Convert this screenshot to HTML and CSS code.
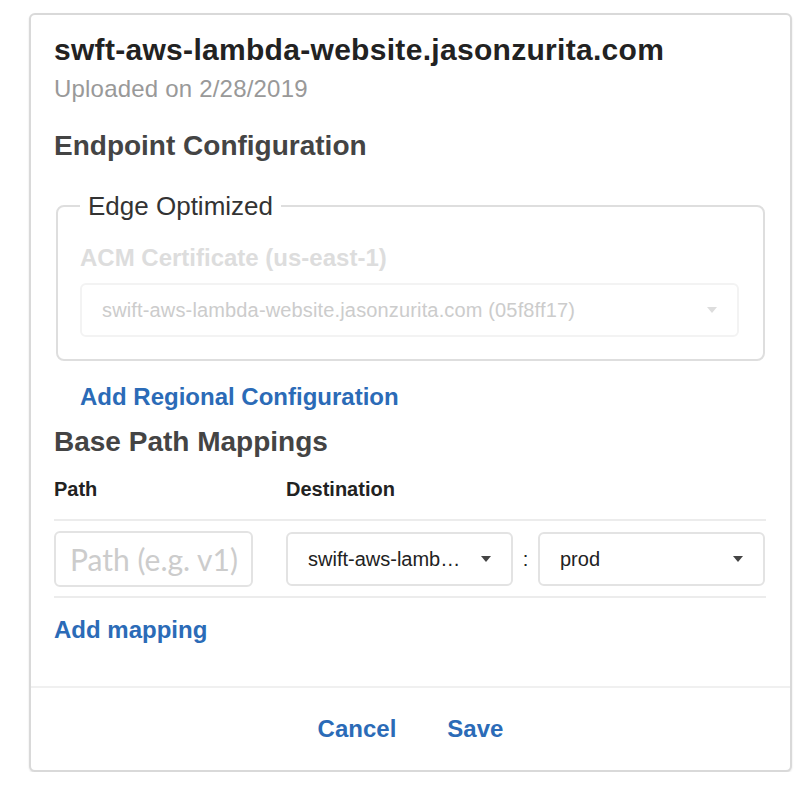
FILE: index.html
```html
<!DOCTYPE html>
<html>
<head>
<meta charset="utf-8">
<link rel="stylesheet" href="styles.css">
</head>
<body>
<div class="card">
  <div class="card-body">
    <h1 class="title">swft-aws-lambda-website.jasonzurita.com</h1>
    <div class="subtitle">Uploaded on 2/28/2019</div>
    <h2 class="section endpoint">Endpoint Configuration</h2>
    <fieldset class="edge">
      <legend>Edge Optimized</legend>
      <div class="field-label">ACM Certificate (us-east-1)</div>
      <div class="select select-disabled">
        <span class="select-text">swift-aws-lambda-website.jasonzurita.com (05f8ff17)</span>
        <svg class="caret" width="10" height="6" viewBox="0 0 10 6"><path d="M0 0h10L5 6z"/></svg>
      </div>
    </fieldset>
    <a class="link regional">Add Regional Configuration</a>
    <h2 class="section mappings">Base Path Mappings</h2>
    <div class="grid head">
      <span class="col-path">Path</span>
      <span class="col-dest">Destination</span>
    </div>
    <div class="rule"></div>
    <div class="grid row">
      <div class="input col-path">Path (e.g. v1)</div>
      <div class="select col-dest">
        <span class="select-text">swift-aws-lamb…</span>
        <svg class="caret" width="10" height="6" viewBox="0 0 10 6"><path d="M0 0h10L5 6z"/></svg>
      </div>
      <span class="colon col-colon">:</span>
      <div class="select col-stage">
        <span class="select-text">prod</span>
        <svg class="caret" width="10" height="6" viewBox="0 0 10 6"><path d="M0 0h10L5 6z"/></svg>
      </div>
    </div>
    <div class="rule rule-bottom"></div>
    <a class="link add-mapping">Add mapping</a>
  </div>
  <div class="card-footer">
    <a class="link">Cancel</a>
    <a class="link">Save</a>
  </div>
</div>
</body>
</html>
```
FILE: styles.css
```css
* { box-sizing: border-box; }

body {
  margin: 0;
  background: #ffffff;
  font-family: "Liberation Sans", Arial, sans-serif;
  color: #222222;
}

.card {
  margin: 13px 0 0 29px;
  width: 763px;
  border: 2px solid #d9d9d9;
  border-radius: 6px;
  box-shadow: 0 1px 2px rgba(0, 0, 0, 0.12);
  background: #fff;
}

.card-body {
  padding: 17px 24px 42px 23px;
  border-bottom: 2px solid #f0f0f0;
}

.title {
  margin: 0;
  font-size: 30px;
  line-height: 36px;
  font-weight: bold;
  letter-spacing: 0.3px;
  color: #222222;
}

.subtitle {
  margin-top: 7px;
  font-size: 24px;
  line-height: 28px;
  letter-spacing: 0.2px;
  color: #999999;
}

.section {
  margin: 0;
  font-size: 28px;
  line-height: 32px;
  font-weight: bold;
  color: #444444;
}

.endpoint { margin-top: 27px; }

.edge {
  margin: 29px 1px 0 2px;
  padding: 0 24px 22px 22px;
  border: 2px solid #dedede;
  border-radius: 8px;
  min-width: 0;
}

.edge legend {
  padding: 0 8px;
  font-size: 26px;
  line-height: 30px;
  color: #333333;
}

.field-label {
  margin-top: 23px;
  font-size: 24px;
  line-height: 28px;
  font-weight: bold;
  color: #dddddd;
}

.select {
  display: flex;
  align-items: center;
  justify-content: space-between;
  height: 54px;
  padding: 0 20px 0 20px;
  border: 2px solid #e3e3e3;
  border-radius: 6px;
  font-size: 20px;
  color: #222222;
  background: #fff;
  min-width: 0;
}

.select-text {
  white-space: nowrap;
  overflow: hidden;
}

.caret { flex: none; fill: #444444; }

.select-disabled {
  margin-top: 11px;
  border-color: #f3f3f3;
  color: #cccccc;
  letter-spacing: 0.15px;
}

.select-disabled .caret { fill: #dddddd; }

.link {
  display: block;
  font-size: 24px;
  line-height: 28px;
  font-weight: bold;
  color: #2b6bb7;
  text-decoration: none;
}

.regional {
  margin: 22px 0 0 26px;
}

.mappings { margin-top: 15px; }

.grid {
  display: grid;
  grid-template-columns: 199px 33px 227px 25px 227px;
}

.col-path { grid-column: 1; }
.col-dest { grid-column: 3; }
.col-colon { grid-column: 4; }
.col-stage { grid-column: 5; }

.head {
  margin-top: 19px;
  font-size: 20px;
  line-height: 24px;
  font-weight: bold;
  color: #222222;
}

.rule {
  margin-top: 18px;
  height: 2px;
  background: #ececec;
}

.row {
  padding-top: 10px;
  align-items: center;
}

.input {
  height: 56px;
  padding: 0 14px;
  border: 2px solid #e3e3e3;
  border-radius: 6px;
  font-family: Lato, "Liberation Sans", sans-serif;
  font-size: 30px;
  line-height: 52px;
  color: #cccccc;
  white-space: nowrap;
  overflow: hidden;
}

.colon {
  text-align: center;
  font-size: 20px;
  color: #222222;
}

.rule-bottom { margin-top: 9px; }

.add-mapping { margin-top: 18px; }

.card-footer {
  height: 82px;
  display: flex;
  align-items: center;
  justify-content: center;
  gap: 51px;
}
```
